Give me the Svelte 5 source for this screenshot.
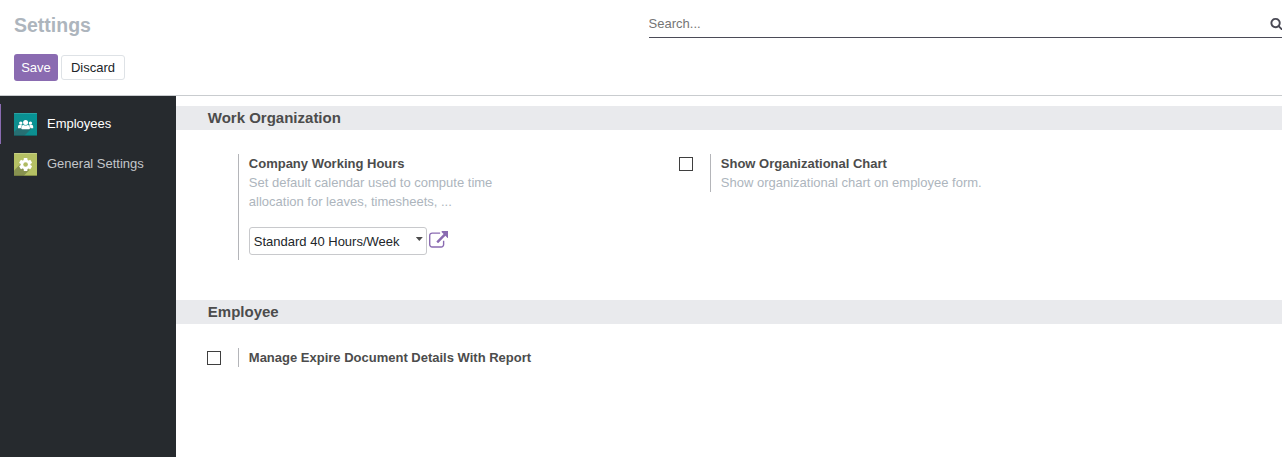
<script>
  let hours = $state(false);
  let search = $state('');
  let active = $state('Employees');
</script>

<div class="page">
  <header>
    <div class="left">
      <h1>Settings</h1>
      <div class="buttons">
        <button class="save">Save</button>
        <button class="discard">Discard</button>
      </div>
    </div>
    <div class="search">
      <input type="text" placeholder="Search..." bind:value={search} />
      <svg class="magnifier" viewBox="0 0 1792 1792"><path d="M1216 832q0-185-131.500-316.500t-316.500-131.500-316.500 131.500-131.500 316.500 131.500 316.500 316.500 131.500 316.500-131.500 131.500-316.500zm512 832q0 52-38 90t-90 38q-54 0-90-38l-343-342q-179 124-399 124-143 0-273.500-55.500t-225-150-150-225-55.500-273.500 55.500-273.500 150-225 225-150 273.500-55.500 273.500 55.500 225 150 150 225 55.500 273.500q0 220-124 399l343 343q37 37 37 90z" /></svg>
    </div>
  </header>

  <div class="body">
    <nav>
      <button class="tab" class:active={active === 'Employees'} onclick={() => (active = 'Employees')}>
        <svg class="app" viewBox="0 0 23 23">
          <defs>
            <linearGradient id="teal" x1="0" y1="1" x2="1" y2="0"><stop offset="0" stop-color="#138b8c" /><stop offset="1" stop-color="#049496" /></linearGradient>
          </defs>
          <rect width="23" height="23" rx="0.6" fill="url(#teal)" />
          <path d="M0 19 4.500 14.500 18 15 10 23H0z" fill="#2f6669" opacity=".75" />
          <path d="M0 .5h23" stroke="#4db3b3" opacity=".5" />
          <path d="M0 22.500h23" stroke="#0c4c50" opacity=".6" />
          <g fill="#fff">
            <circle cx="6.800" cy="10.100" r="1.700" />
            <circle cx="16.400" cy="10.100" r="1.700" />
            <path d="M4 15.300v-1.600c0-1.300.7-2 1.700-2h2.500c-.8.8-1.200 1.900-1.400 3.600z" />
            <path d="M19.200 15.300v-1.600c0-1.300-.7-2-1.700-2H15c.8.800 1.200 1.900 1.400 3.600z" />
            <circle cx="11.600" cy="9.500" r="2.500" />
            <path d="M7.300 15.200v-.6c0-1.700.9-2.700 2.200-2.700 1.300.7 2.900.7 4.200 0 1.300 0 2.200 1 2.200 2.700v.6c0 .7-.5 1.100-1.100 1.100H8.400c-.6 0-1.100-.4-1.100-1.100z" />
          </g>
        </svg>
        <span>Employees</span>
      </button>
      <button class="tab" class:active={active === 'General Settings'} onclick={() => (active = 'General Settings')}>
        <svg class="app" viewBox="0 0 23 23">
          <rect width="23" height="23" rx="0.6" fill="#b5c164" />
          <path d="M0 17.500 6 11.500l9.500 5.500-6 6H0z" fill="#87924f" />
          <path d="M0 .5h23" stroke="#d1d99a" opacity=".6" />
          <path d="M0 22.500h23" stroke="#656d38" opacity=".6" />
          <g fill="#fff">
            <rect x="9.700" y="5" width="3.800" height="13" rx=".7" />
            <rect x="9.700" y="5" width="3.800" height="13" rx=".7" transform="rotate(60 11.600 11.500)" />
            <rect x="9.700" y="5" width="3.800" height="13" rx=".7" transform="rotate(120 11.600 11.500)" />
            <circle cx="11.600" cy="11.500" r="4.800" />
          </g>
          <circle cx="11.600" cy="11.500" r="2.300" fill="#b0bb62" />
        </svg>
        <span>General Settings</span>
      </button>
    </nav>

    <main>
      <h2>Work Organization</h2>
      <div class="row first">
        <section>
          <div class="check"></div>
          <div class="detail tall">
            <strong>Company Working Hours</strong>
            <p>Set default calendar used to compute time<br />allocation for leaves, timesheets, ...</p>
            <div class="field">
              <div class="select">
                <span>Standard 40 Hours/Week</span>
                <i></i>
              </div>
              <svg class="external" viewBox="0 0 1792 1536"><path d="M1408 928v320q0 119-84.500 203.500t-203.500 84.500h-832q-119 0-203.500-84.500t-84.500-203.500v-832q0-119 84.500-203.500t203.500-84.500h704q14 0 23 9t9 23v64q0 14-9 23t-23 9h-704q-66 0-113 47t-47 113v832q0 66 47 113t113 47h832q66 0 113-47t47-113v-320q0-14 9-23t23-9h64q14 0 23 9t9 23zm384-864v512q0 26-19 45t-45 19-45-19l-176-176-652 652q-10 10-23 10t-23-10l-114-114q-10-10-10-23t10-23l652-652-176-176q-19-19-19-45t19-45 45-19h512q26 0 45 19t19 45z" /></svg>
            </div>
          </div>
        </section>
        <section>
          <div class="check"><input type="checkbox" bind:checked={hours} /></div>
          <div class="detail">
            <strong>Show Organizational Chart</strong>
            <p>Show organizational chart on employee form.</p>
          </div>
        </section>
      </div>

      <h2>Employee</h2>
      <div class="row">
        <section>
          <div class="check"><input type="checkbox" /></div>
          <div class="detail">
            <strong>Manage Expire Document Details With Report</strong>
          </div>
        </section>
      </div>
    </main>
  </div>
</div>

<style>
  :global(body) {
    margin: 0;
    overflow: hidden;
  }
  .page {
    display: flex;
    flex-direction: column;
    height: 457px;
    box-sizing: border-box;
    overflow: hidden;
    background: #fff;
    color: #4c4c4c;
    font: 13px/19px "Liberation Sans", Arial, sans-serif;
  }
  header {
    display: flex;
    flex: none;
    height: 96px;
    box-sizing: border-box;
    border-bottom: 1px solid #c9cccf;
    padding-left: 14px;
  }
  .left {
    width: 634.6px;
    flex: none;
  }
  h1 {
    margin: 10px 0 14px;
    font-size: 19.5px;
    line-height: 30px;
    color: #adb5bd;
  }
  .buttons {
    display: flex;
    align-items: center;
    gap: 3px;
  }
  button {
    font: inherit;
    margin: 0;
  }
  .save,
  .discard {
    box-sizing: border-box;
    padding: 0;
    border-radius: 3px;
  }
  .save {
    width: 44px;
    height: 27px;
    border: 0;
    background: #8a6bb1;
    color: #fff;
  }
  .discard {
    width: 64px;
    height: 25px;
    border: 1px solid #dee2e6;
    background: #fff;
    color: #212529;
  }
  .search {
    display: flex;
    align-items: center;
    width: 636px;
    flex: none;
    height: 29px;
    margin-top: 9px;
    box-sizing: border-box;
    border-bottom: 1px solid #4b4b57;
    overflow: hidden;
  }
  .search input {
    flex: none;
    width: 621.6px;
    padding: 0;
    border: 0;
    outline: 0;
    font: inherit;
    color: #4c4c4c;
  }
  .search input::placeholder {
    color: #757575;
  }
  .magnifier {
    flex: none;
    width: 13px;
    height: 13px;
    fill: #4a4a55;
  }
  .body {
    display: flex;
    flex: 1;
    min-height: 0;
  }
  nav {
    flex: none;
    width: 176px;
    box-sizing: border-box;
    padding-top: 8px;
    background: #262a2e;
  }
  .tab {
    display: flex;
    align-items: center;
    gap: 10px;
    width: 100%;
    height: 40px;
    padding: 0 0 0 13px;
    border: 0;
    border-left: 1px solid transparent;
    background: none;
    color: #c3c6ca;
  }
  .tab.active {
    border-left-color: #8a6bb1;
    color: #fff;
  }
  .tab span {
    padding-bottom: 2px;
  }
  .app {
    width: 23px;
    height: 23px;
    margin-top: 1px;
  }
  main {
    flex: 1;
    min-width: 0;
    padding-top: 10px;
  }
  h2 {
    margin: 0;
    padding-left: 31.8px;
    height: 24px;
    background: #e9eaed;
    font-size: 15px;
    line-height: 24px;
    color: #4c4c4c;
  }
  .row {
    display: flex;
    align-items: flex-start;
    padding: 24px 0 0 31px;
  }
  .row.first {
    padding-bottom: 40px;
  }
  section {
    display: flex;
    width: 472px;
  }
  .check {
    width: 31px;
    padding-top: 3px;
  }
  .check input {
    display: block;
    appearance: none;
    box-sizing: border-box;
    width: 14px;
    height: 14px;
    margin: 0;
    border: 1px solid #3f3f3f;
    background: #fff;
  }
  .detail {
    border-left: 1px solid #b4b5b9;
    padding-left: 9.8px;
  }
  .tall {
    height: 106px;
  }
  strong {
    display: block;
  }
  p {
    margin: 0;
    color: #adb5bd;
  }
  .field {
    display: flex;
    align-items: flex-start;
    gap: 2px;
    margin-top: 16px;
  }
  .select {
    display: flex;
    align-items: center;
    justify-content: space-between;
    width: 178px;
    height: 28px;
    box-sizing: border-box;
    padding: 0 3px 0 4px;
    border: 1px solid #c8c9cc;
    border-radius: 3px;
    color: #212529;
  }
  .select i {
    width: 7px;
    height: 4px;
    margin-top: -4px;
    background: #4c4c4c;
    clip-path: polygon(0 0, 100% 0, 50% 100%);
  }
  .external {
    width: 19.5px;
    height: 16.7px;
    margin-top: 4px;
    fill: #8a6bb1;
  }
</style>
